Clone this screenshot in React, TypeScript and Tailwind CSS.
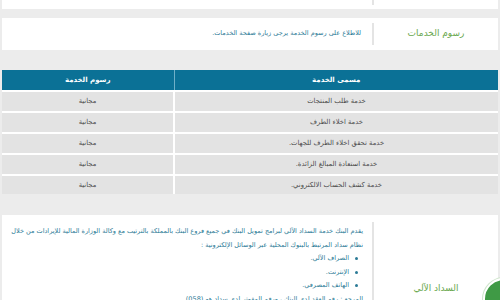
import React from 'react';

const services = [
  'خدمة طلب المنتجات',
  'خدمة اخلاء الطرف',
  'خدمة تحقق اخلاء الطرف للجهات.',
  'خدمة استعادة المبالغ الزائدة.',
  'خدمة كشف الحساب الالكتروني.',
];

const channels = ['الصراف الآلي.', 'الإنترنت.', 'الهاتف المصرفي.'];

const App: React.FC = () => {
  return (
    <div
      dir="rtl"
      className="relative w-[500px] h-[300px] overflow-hidden bg-[#ececec] px-[2px] flex flex-col"
      style={{ fontFamily: '"DejaVu Sans", sans-serif' }}
    >
      {/* previous card tail */}
      <div className="h-[9px] shrink-0 bg-white flex">
        <div className="w-[124px] shrink-0" />
        <div className="w-[2px] h-[5px] bg-[#e4e4e4]" />
      </div>

      {/* fees card */}
      <div className="mt-[9px] h-[32px] shrink-0 bg-white flex items-center">
        <div className="w-[124px] shrink-0 text-center text-[9px] text-[#6aa84f]">رسوم الخدمات</div>
        <div className="w-[2px] h-[22px] bg-[#e4e4e4]" />
        <p className="pr-[11px] text-[6.5px] text-[#2b7a96]">
          للاطلاع على رسوم الخدمة يرجى زيارة صفحة الخدمات.
        </p>
      </div>

      {/* services table */}
      <table className="mt-[20px] w-full shrink-0 border-collapse text-[6.8px] text-center">
        <thead>
          <tr className="h-[21px] bg-[#0b7196] text-white text-[7px]">
            <th className="w-[324px] border-l border-[#6fb0c8] font-bold">مسمى الخدمة</th>
            <th className="font-bold">رسوم الخدمة</th>
          </tr>
        </thead>
        <tbody>
          {services.map((s, i) => (
            <tr key={i} className={`${i === services.length - 1 ? 'h-[19px]' : 'h-[21px]'} bg-[#e3e3e3] text-[#4a4a4a] border-t-2 border-white`}>
              <td className="border-l-2 border-white">{s}</td>
              <td>مجانية</td>
            </tr>
          ))}
        </tbody>
      </table>

      {/* auto payment card */}
      <div className="mt-[21px] flex-1 bg-white flex pt-[7px]">
        <div className="w-[124px] shrink-0 flex items-end justify-center pb-[11px]">
          <span className="text-[9px] text-[#6aa84f]">السداد الآلي</span>
        </div>
        <div className="w-[2px] bg-[#e4e4e4]" />
        <div className="flex-1 pr-[9px] pt-[3px] text-[6.5px] leading-[13.5px] text-[#2b7a96] whitespace-nowrap">
          <p>يقدم البنك خدمة السداد الآلي لبرامج تمويل البنك في جميع فروع البنك بالمملكة بالترتيب مع وكالة الوزارة المالية للإيرادات من خلال</p>
          <p>نظام سداد المرتبط بالبنوك المحلية عبر الوسائل الإلكترونية :</p>
          <ul className="pr-[5px]">
            {channels.map((c) => (
              <li key={c} className="flex items-center gap-[6px]">
                <span className="w-[3px] h-[3px] rounded-full bg-[#2b7a96]" />
                {c}
              </li>
            ))}
          </ul>
          <p>المرجع : رقم العقد لدى البنك ، ورقم المفوتر لدى سداد هو (058)</p>
        </div>
      </div>

      {/* floating helper */}
      <div className="absolute left-[483px] top-[278px] w-[42px] h-[42px] rounded-full bg-[#3f9a45] border-2 border-white shadow-[0_0_0_1px_#cfe5cc] flex items-start justify-start pt-[8px] pl-[3px]">
        <span className="text-[8px] text-white leading-none">مساعد</span>
      </div>
    </div>
  );
};

export default App;
